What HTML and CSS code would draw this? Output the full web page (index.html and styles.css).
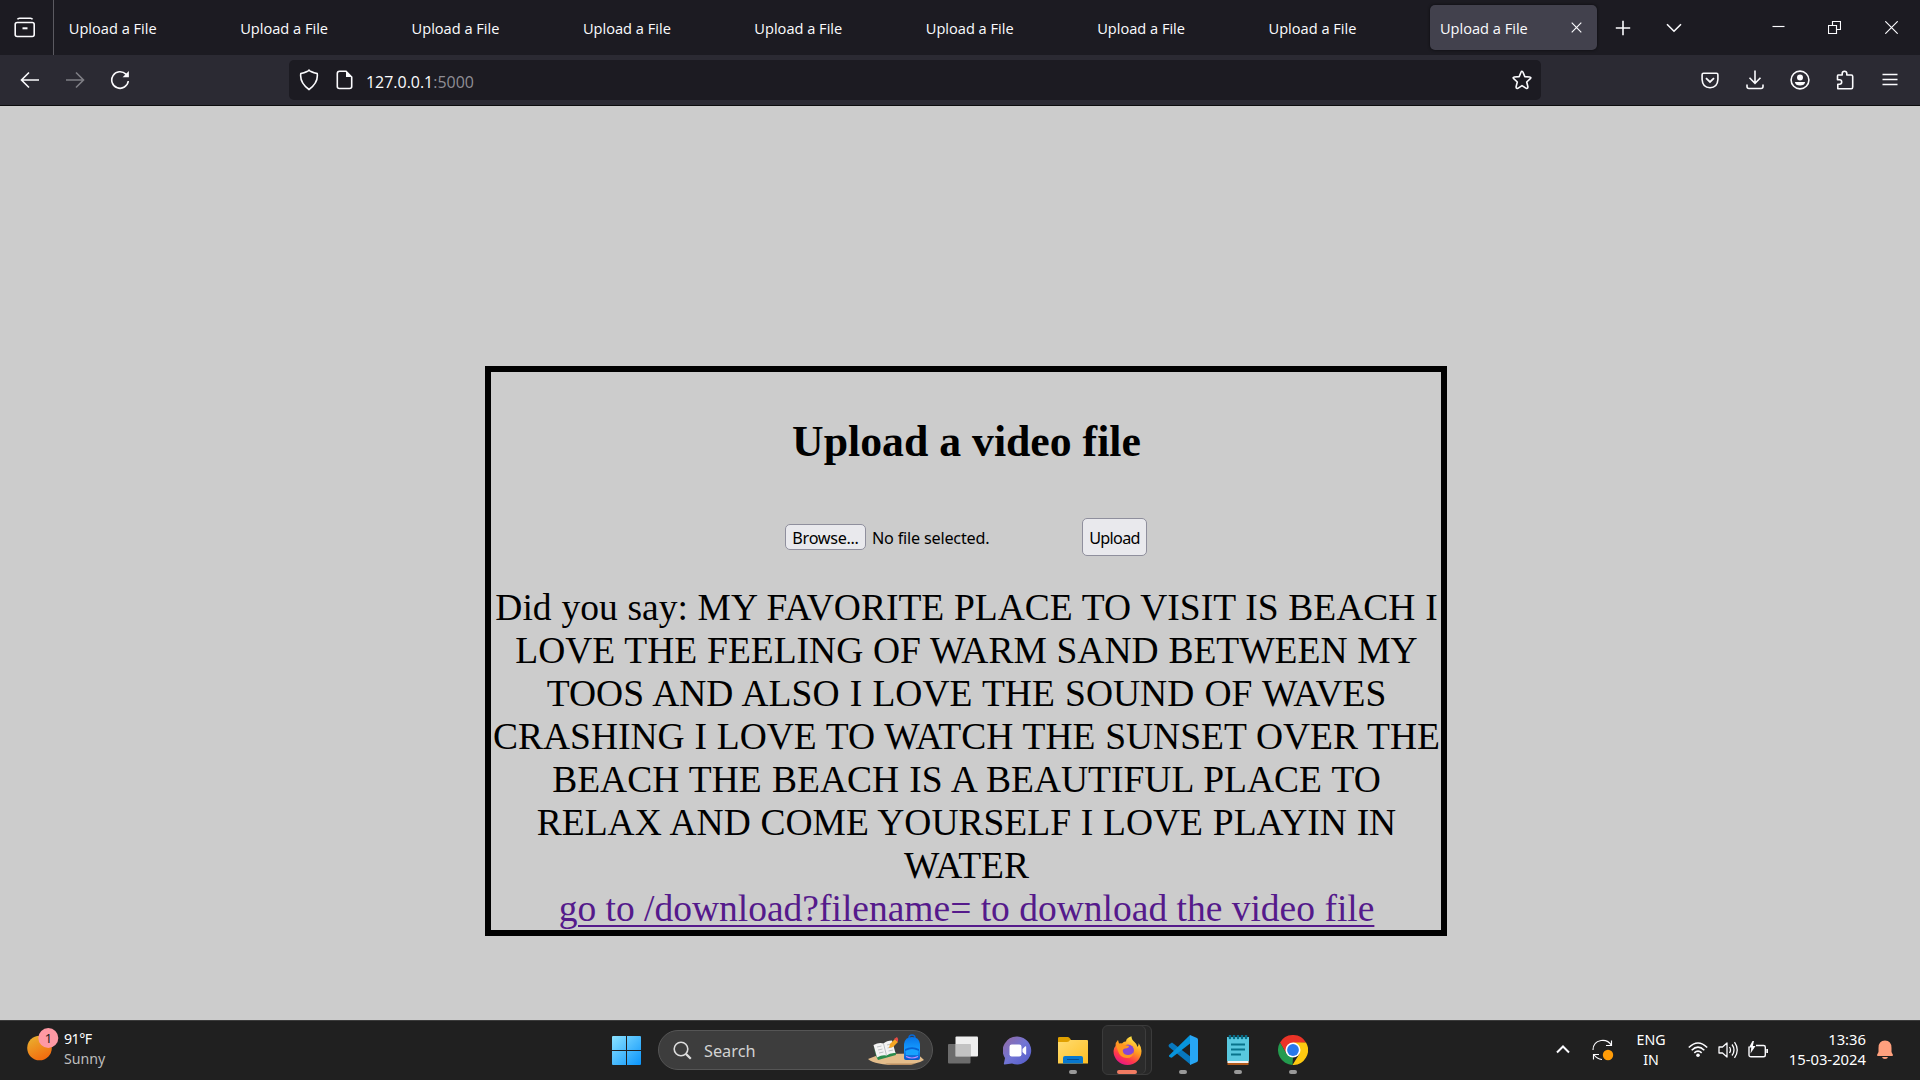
FILE: index.html
```
<!DOCTYPE html>
<html lang="en">
<head>
<meta charset="utf-8">
<title>Upload a File</title>
<link rel="stylesheet" href="styles.css">
</head>
<body>
<div class="screen">
  <header class="tabstrip">
    <div class="firefox-view">
      <svg class="icon" width="22" height="22" viewBox="0 0 22 22"><path d="M3.5 2.3Q4 1.2 5.5 1.2H16.500Q18 1.200 18.500 2.300"/><rect x="1.200" y="5.500" width="19" height="14" rx="2"/><path d="M8.500 11.300H13.500" stroke-width="2"/></svg>
    </div>
    <nav class="tabs">
      <div class="tab">Upload a File</div>
      <div class="tab">Upload a File</div>
      <div class="tab">Upload a File</div>
      <div class="tab">Upload a File</div>
      <div class="tab">Upload a File</div>
      <div class="tab">Upload a File</div>
      <div class="tab">Upload a File</div>
      <div class="tab">Upload a File</div>
      <div class="tab tab-active">Upload a File
        <svg class="icon thin" width="11" height="11" viewBox="0 0 11 11"><path d="M.7.7L10.300 10.300M10.300.7L.7 10.300"/></svg>
      </div>
    </nav>
    <div class="tab-tool new-tab"><svg class="icon" width="16" height="16" viewBox="0 0 16 16"><path d="M8 .8V15.200M.8 8H15.200"/></svg></div>
    <div class="tab-tool list-tabs"><svg class="icon" width="16" height="10" viewBox="0 0 16 10"><path d="M1 1.200L8 8.200L15 1.200"/></svg></div>
    <div class="window-controls">
      <svg class="icon thin" width="13" height="13" viewBox="0 0 13 13"><path d="M.5 5.500H12.500"/></svg>
      <svg class="icon thin" width="13" height="13" viewBox="0 0 13 13"><path d="M.5 4.500H8.500V12.500H.5ZM4.500 4.500V.5H12.500V8.500H8.500"/></svg>
      <svg class="icon thin" width="13" height="13" viewBox="0 0 13 13"><path d="M.3.3L12.700 12.700M12.700.3L.3 12.700"/></svg>
    </div>
  </header>

  <div class="toolbar">
    <div class="tools">
      <span class="tool"><svg class="icon" width="20" height="18" viewBox="0 0 20 18"><path d="M19 9H2M9 1.500L1.500 9L9 16.500"/></svg></span>
      <span class="tool disabled"><svg class="icon" width="20" height="18" viewBox="0 0 20 18"><path d="M1 9H18M11 1.500L18.500 9L11 16.500"/></svg></span>
      <span class="tool"><svg class="icon" width="20" height="20" viewBox="0 0 20 20"><path d="M18.300 11A8.300 8.300 0 1 1 15.900 4.100L17 5.200"/><path class="solid" d="M18.900 1V7.300H12.600Z"/></svg></span>
    </div>
    <div class="urlbar">
      <svg class="icon shield" width="20" height="22" viewBox="0 0 20 22"><path d="M10 1.200Q11 2.600 18.200 4.600Q19.500 13.500 10 20.500Q.5 13.500 1.800 4.600Q9 2.600 10 1.200Z"/></svg>
      <svg class="icon page-icon" width="17" height="20" viewBox="0 0 17 20"><path d="M3.500 1.200H10L15.700 7V16.500Q15.700 18.500 13.500 18.500H3.500Q1.300 18.500 1.300 16.500V3.500Q1.300 1.200 3.500 1.200Z"/><path class="solid" d="M10 .8V7H16Z"/></svg>
      <span class="url">127.0.0.1<span class="port">:5000</span></span>
      <svg class="icon star" width="20" height="20" viewBox="0 0 20 20"><path stroke-linejoin="round" d="M10 1.200Q10.600 1.200 11 2.200L12.800 6.600L17.700 7Q19.600 7.300 18.300 8.700L14.700 12L15.900 16.800Q16 19 14.200 18.300L10 15.600L5.800 18.300Q4 19 4.100 16.800L5.300 12L1.700 8.700Q.4 7.300 2.300 7L7.200 6.600L9 2.200Q9.400 1.200 10 1.200Z"/></svg>
    </div>
    <div class="tools tools-end">
      <span class="tool"><svg class="icon" width="18" height="17" viewBox="0 0 18 17"><path d="M2.500 1.200H15.500Q16.900 1.200 16.900 2.700V7.500Q16.500 15.500 9 15.800Q1.500 15.500 1.100 7.500V2.700Q1.100 1.200 2.500 1.200Z"/><path d="M5 6.200L9 10L13 6.200" stroke-width="1.800"/></svg></span>
      <span class="tool"><svg class="icon" width="18" height="20" viewBox="0 0 18 20"><path d="M9 .5V13M3.500 7.800L9 13.300L14.500 7.800M1 14.500V16.500Q1 18.500 3 18.500H15Q17 18.500 17 16.500V14.500"/></svg></span>
      <span class="tool"><svg class="icon" width="20" height="20" viewBox="0 0 20 20"><circle cx="10" cy="10" r="8.900"/><circle class="solid" cx="10" cy="7.500" r="3"/><path class="solid" d="M4.800 12H15.200Q14.500 15.500 10 15.500T4.800 12Z"/></svg></span>
      <span class="tool"><svg class="icon" width="18" height="20" viewBox="0 0 18 20"><path stroke-linejoin="round" d="M2 5H6.200V3.500A2.300 2.300 0 0 1 10.800 3.500V5H15.300Q16.700 5 16.700 6.500V17Q16.700 18.700 15.300 18.700H1.800V14.200H3.500A2.200 2.200 0 0 0 3.500 9.800H1.500V6.200Q1.500 5 2 5Z"/></svg></span>
      <span class="tool"><svg class="icon" width="16" height="14" viewBox="0 0 16 14"><path d="M.5 1.500H15.500M.5 6.500H15.500M.5 11.500H15.500"/></svg></span>
    </div>
  </div>

  <main class="page">
    <section class="upload-card">
      <h1>Upload a video file</h1>
      <form class="upload-form">
        <button type="button" class="btn browse">Browse...</button>
        <span class="file-name">No file selected.</span>
        <button type="button" class="btn submit">Upload</button>
      </form>
      <p><span class="loose">Did you say: MY FAVORITE PLACE TO VISIT IS BEACH I</span><br><span class="loose">LOVE THE FEELING OF WARM SAND BETWEEN MY</span><br><span class="looser">TOOS AND ALSO I LOVE THE SOUND OF WAVES</span><br><span class="loose">CRASHING I LOVE TO WATCH THE SUNSET OVER THE</span><br><span class="looser">BEACH THE BEACH IS A BEAUTIFUL PLACE TO</span><br><span class="loose">RELAX AND COME YOURSELF I LOVE PLAYIN IN</span><br>WATER<br><a href="#">go to /download?filename= to download the video file</a></p>
    </section>
  </main>

  <footer class="taskbar">
    <div class="weather">
      <svg width="32" height="34" viewBox="0 0 32 34">
        <defs><linearGradient id="sun" x1=".2" y1="0" x2=".7" y2="1"><stop offset="0" stop-color="#e9b02f"/><stop offset="1" stop-color="#f4680c"/></linearGradient></defs>
        <circle cx="12.500" cy="20" r="12.300" fill="url(#sun)"/><circle cx="21.300" cy="10" r="10" fill="#fe99a4"/>
        <text class="badge-text" x="21.500" y="14.800">1</text>
      </svg>
      <div class="weather-text"><span class="temperature">91°F</span><span class="condition">Sunny</span></div>
    </div>
    <div class="task-items">
      <svg class="start" width="29" height="29" viewBox="0 0 29 29">
        <defs><linearGradient id="win" x1="0" y1="0" x2="29" y2="29" gradientUnits="userSpaceOnUse"><stop offset="0" stop-color="#8be2ff"/><stop offset="1" stop-color="#0a94fb"/></linearGradient></defs>
        <path fill="url(#win)" d="M0 1Q0 0 1 0H14V14H0ZM15 0H28Q29 0 29 1V14H15ZM0 15H14V29H1Q0 29 0 28ZM15 15H29V28Q29 29 28 29H15Z"/>
      </svg>
      <div class="search">
        <svg class="icon magnifier" width="19" height="19" viewBox="0 0 19 19"><circle cx="8" cy="8" r="6.800"/><path d="M12.900 12.900L17.800 17.800" stroke-width="2.200"/></svg>
        <span>Search</span>
        <svg class="highlight" width="58" height="33" viewBox="0 0 58 33">
          <defs><linearGradient id="bag" x2="0" y2="1"><stop offset="0" stop-color="#0875e8"/><stop offset=".55" stop-color="#159cff"/><stop offset="1" stop-color="#0753c8"/></linearGradient></defs>
          <path fill="#e4bd8b" d="M1 25L14 20L50 19.500L57 26Q50 31 31 31Q8 31 1 25Z"/><path fill="#b98d60" d="M18 29.500H49L44 31H24Z"/>
          <path fill="#2a8c4c" d="M6.500 13L9 22L11 26L29 21L28.500 18L10 22Z"/><path fill="#f3f3f3" d="M6.500 11Q12 8 16.500 9.500Q19.500 6.500 25 6.500L28.500 19Q23 18.500 19.500 21.500Q15 20.500 10 23.500Z"/><path d="M16.500 9.500L19.500 21.500M10 13L14.500 12M11 16L15.500 15M12 19L16.500 18M20 11L24 10M20.500 14L25 13M21.500 17L26 16" fill="none" stroke="#a4a9ad" stroke-width=".7"/>
          <path fill="#f5a623" d="M22 14L23 10L28 5L31 8L26 13Z"/><path fill="#e94b45" d="M27 5L30 3Q32 5 31 8Z"/>
          <path d="M42 4Q42 1 45 1T48 4" fill="none" stroke="#0967d2" stroke-width="1.500"/><path fill="url(#bag)" d="M37 10Q38 3 45 3T53 10V24Q53 26 51 26H39Q37 26 37 24Z"/><path fill="#0761d2" d="M38 15Q45 11.500 52 15V17Q45 13.500 38 17Z"/><path fill="#18a2ff" d="M39 17Q45 13.500 51 17V21H39Z"/><path stroke="#c88bff" fill="none" stroke-width="1.200" d="M39 22.500Q45 25.500 51 22.500"/>
        </svg>
      </div>
      <div class="apps">
        <div class="app"><svg width="30" height="28" viewBox="0 0 30 28"><rect x="7.500" y=".5" width="22.500" height="20" rx="1" fill="#efefef"/><rect x="0" y="8" width="22.500" height="19.500" rx="1" fill="#858585" opacity=".75"/><path fill="#c3c3c3" d="M7.500 8H22.500V20.500H7.500Z"/></svg></div>
        <div class="app"><svg width="29" height="29" viewBox="0 0 29 29">
          <defs><linearGradient id="chat" x2="1" y2="1"><stop offset="0" stop-color="#95699f"/><stop offset=".5" stop-color="#7275d4"/><stop offset="1" stop-color="#5059c9"/></linearGradient></defs>
          <path fill="url(#chat)" d="M14.500.5A14 14 0 1 1 9 27.500L1.500 28.500Q.5 28.500 1 27L2 22A14 14 0 0 1 14.500.5Z"/><rect x="6.500" y="8.500" width="12" height="12" rx="2.200" fill="#fff"/><path fill="#fff" d="M19.500 13L22 10.500Q23.200 10 23.200 11V18Q23.200 19 22 18.500L19.500 16Z"/></svg></div>
        <div class="app running"><svg width="30" height="28" viewBox="0 0 30 28">
          <defs><linearGradient id="folder" x2="1" y2="1"><stop offset="0" stop-color="#ffdc70"/><stop offset="1" stop-color="#ffbf24"/></linearGradient></defs>
          <path fill="#e0a000" d="M0 2Q0 1 1.500 1H10Q11 1 12 2.500L13 4H20V10H0Z"/><path fill="url(#folder)" d="M0 6H9Q11 6 12 4H29Q30 4 30 5V27.500H0Z"/><path fill="#0878cf" d="M5 27.500V22Q5 20 7 20H23Q25 20 25 22V27.500Z"/><path stroke="#064d91" d="M9 23.500H21"/></svg></div>
        <div class="app running current"><svg width="29" height="29" viewBox="0 0 29 29">
          <defs><linearGradient id="fox" x1=".8" y1="0" x2=".3" y2="1"><stop offset="0" stop-color="#fff44f"/><stop offset=".45" stop-color="#ff9a1f"/><stop offset=".75" stop-color="#ff394a"/><stop offset="1" stop-color="#e3158b"/></linearGradient></defs>
          <path fill="url(#fox)" d="M2.500 10Q2.500 6 5 4L6 7.500H9Q11 5 13 5.500Q13 2 18.500.3Q18.500 4 21.500 6Q24 8 24.500 11Q26 9 25.500 7Q28.500 11 28.500 15A14 14 0 0 1 .5 15Q.5 12 2.500 10Z"/><circle cx="15" cy="14.500" r="6" fill="#8746d5"/><path fill="#ff9620" d="M3 9Q8 6 12 9L16 10Q16 12 12 12.500Q9 13 10 16Q11 19 15 19Q19 19 20.500 16Q20 22 14 22Q7 22 5 15Z"/></svg></div>
        <div class="app running"><svg width="30" height="30" viewBox="0 0 30 30"><path fill="#0877bd" d="M1 9.500L4 7.500L23 22V30L1 12Q0 10.500 1 9.500Z"/><path fill="#0794dc" d="M1 20.500L22 0L24 7L4 22.500Q2.500 23 1 21.500Z"/><path fill="#27a6f5" d="M22 0L29 3Q30 3.500 30 5V25Q30 26.500 29 27L22 30Z"/></svg></div>
        <div class="app running"><svg width="22" height="30" viewBox="0 0 22 30"><path fill="#b45b1b" d="M.5 25H21.500V30H.5Z"/><path fill="#f2f2f2" d="M.5 25H21.500V28H.5Z"/><path fill="#59c8df" d="M0 2H22V26H0Z"/><path stroke="#086d88" stroke-width="2.500" stroke-linecap="round" d="M3 .8V3M7 .8V3M11 .8V3M15 .8V3M19 .8V3"/><path stroke="#08738b" stroke-width="1.800" d="M4 9.500H18M4 14.500H18M4 19.500H14"/></svg></div>
        <div class="app running"><svg width="30" height="30" viewBox="0 0 30 30"><path fill="#ea3327" d="M2 7.500A15 15 0 0 1 28 7.500L15 8.500L8.500 18.800Z"/><path fill="#239b4e" d="M2 7.500L8.500 18.700L15 22.500L14.500 30A15 15 0 0 1 2 7.500Z"/><path fill="#fdc910" d="M15 7.500H28A15 15 0 0 1 14.500 30L21.500 18.800Z"/><circle cx="15" cy="15" r="7.500" fill="#fff"/><circle cx="15" cy="15" r="5.900" fill="#2878eb"/></svg></div>
      </div>
    </div>
    <div class="tray">
      <span class="tray-icon overflow"><svg class="icon" width="14" height="9" viewBox="0 0 14 9"><path stroke-width="2" d="M1 7.500L7 1.500L13 7.500"/></svg></span>
      <span class="tray-icon sync"><svg class="icon thin" width="22" height="22" viewBox="0 0 22 22"><path d="M1 11Q1 3 9 1.500Q16 .5 19.500 6.500M19.500 1.500V6.500H14M1.500 20.500V15.500H7M1.800 15.500Q5 20 10 20.500"/><circle cx="16" cy="16" r="5.200" fill="#ff9c08" stroke="none"/></svg></span>
      <div class="language"><span>ENG</span><span>IN</span></div>
      <span class="tray-icon"><svg class="icon" width="20" height="16" viewBox="0 0 20 16"><path d="M.8 5.500Q10-3.500 19.200 5.500M3.700 8.200Q10 2 16.300 8.200M6.300 10.900Q10 7.500 13.700 10.900"/><circle class="solid" cx="10" cy="13.300" r="1.800"/></svg></span>
      <span class="tray-icon"><svg class="icon" width="20" height="18" viewBox="0 0 20 18"><path stroke-width="1.300" stroke-linejoin="round" d="M1 6H4.500L9 2V16L4.500 12H1ZM11.500 6Q13.500 9 11.500 12M14 3.500Q18 9 14 14.500M16.500 1.200Q22 9 16.500 16.800"/></svg></span>
      <span class="tray-icon"><svg class="icon" width="20" height="18" viewBox="0 0 20 18"><path stroke-width="1.400" d="M8 4.500H15.500Q17.300 4.500 17.300 6V14Q17.300 15.800 15.500 15.800H3Q1 15.800 1 14V5.500"/><path class="solid" d="M18.300 8H20V12H18.300ZM4.500 0L1 6.500H3.300L2.500 12.500L7.500 5H4.800L6 0Z"/></svg></span>
      <div class="clock"><span>13:36</span><span>15-03-2024</span></div>
      <svg class="bell" width="16" height="19" viewBox="0 0 16 19"><path fill="#ffa07d" d="M1.500 8Q1.500.5 8 .5T14.500 8V12L16 15Q16 16 15 16H1Q0 16 0 15L1.500 12ZM5 17H11Q10.500 19 8 19T5 17Z"/></svg>
    </div>
  </footer>
</div>
</body>
</html>
```
FILE: styles.css
```
* { box-sizing: border-box; }
body { margin: 0; overflow: hidden; font-family: "Open Sans", "Noto Sans", sans-serif; }
svg { display: block; flex: none; }
.screen { display: flex; flex-direction: column; width: 1920px; height: 1080px; background: #ccc; }
.icon { fill: none; stroke: #fbfbfe; stroke-width: 1.6; }
.icon.thin { stroke-width: 1.15; }
.icon .solid { fill: #fbfbfe; stroke: none; }

.tabstrip { display: flex; align-items: center; height: 55px; background: #1c1b22; color: #fbfbfe; }
.firefox-view { display: flex; align-items: center; width: 54px; height: 55px; padding-left: 14px; border-right: 1px solid #5b5a61; }
.tabs { display: flex; gap: 4.4px; padding-left: 4.8px; }
.tab { display: flex; align-items: center; justify-content: space-between; width: 167px; height: 45px; padding: 0 15px 0 10px; border-radius: 5px; font-size: 14.6px; white-space: nowrap; }
.tab-active { background: #42414d; box-shadow: 0 0 3px #0b0b0e; }
.tab-tool { display: flex; justify-content: center; }
.new-tab { width: 53px; }
.list-tabs { width: 48px; }
.window-controls { display: flex; flex: 1; justify-content: space-between; padding: 0 22px 0 74px; }

.toolbar { display: flex; align-items: center; height: 51px; padding: 0 8px 0 7px; background: #2b2a33; border-bottom: 1px solid #0c0c0d; }
.tools { display: flex; width: 282px; }
.tool { display: flex; align-items: center; justify-content: center; width: 45px; height: 40px; }
.disabled { opacity: .4; }
.tools-end { flex: 1; justify-content: flex-end; }
.urlbar { display: flex; align-items: center; width: 1252px; height: 40px; padding: 0 9px 0 10px; border-radius: 5px; background: #1c1b22; color: #fbfbfe; }
.page-icon { margin: 0 13px 0 17px; }
.url { flex: 1; padding-top: 3px; font-size: 15.95px; }
.port { color: #8f8e95; }

.page { flex: 1; padding: 260px 0 0 485px; }
.upload-card { width: 962px; height: 570px; border: 6px solid #000; text-align: center; color: #000; font-family: "Liberation Serif", serif; }
.upload-card h1 { margin: 44px 0 52px; padding-left: 1px; font-size: 43.75px; line-height: 50px; }
.upload-form { display: flex; align-items: center; justify-content: center; height: 38px; font-family: "Noto Sans", sans-serif; font-size: 16.2px; }
.btn { padding: 0; border: 1px solid #8f8f9d; border-radius: 5px; background: #e9e9ed; color: #000; font: inherit; line-height: 24px; }
.browse { width: 81px; height: 26px; padding-top: 1px; letter-spacing: -.3px; }
.file-name { width: 210px; margin-left: 6px; padding-top: 2px; text-align: left; letter-spacing: -.2px; }
.submit { width: 65px; height: 38px; padding-top: 2px; letter-spacing: -.7px; }
.upload-card p { margin: 30px 0 0; padding-left: 1px; font-size: 37.5px; line-height: 43px; white-space: nowrap; }
.loose { word-spacing: .4px; }
.looser { word-spacing: .85px; }
.upload-card a { color: #551a8b; text-decoration-thickness: 2px; text-underline-offset: 4px; }

.taskbar { display: flex; align-items: center; height: 60px; border-top: 1px solid #3b3b3b; background: #202020; color: #fff; font-family: "Noto Sans", sans-serif; font-size: 14.2px; line-height: 20px; }
.weather { display: flex; width: 612px; padding: 0 0 4px 27px; }
.weather-text { display: flex; flex-direction: column; margin: 1px 0 0 5px; }
.temperature { letter-spacing: -.5px; }
.condition { color: #bdbdbd; }
.badge-text { fill: #202020; font-size: 13px; text-anchor: middle; }
.task-items { display: flex; align-items: center; width: 709px; padding-bottom: 1px; }
.search { display: flex; align-items: center; width: 275px; height: 40px; margin: 0 2px 0 17px; padding: 0 7px 0 14px; border: 1px solid #555; border-radius: 20px; background: #3d3d3d; color: #d2d2d2; font-size: 16.3px; }
.magnifier { stroke: #ddd; }
.search span { flex: 1; margin-left: 12px; padding-top: 2px; }
.apps { display: flex; }
.app { position: relative; display: flex; align-items: center; justify-content: center; width: 55px; height: 50px; }
.running::after { content: ""; position: absolute; bottom: 1px; width: 8px; height: 4px; border-radius: 2px; background: #999; }
.current { width: 50px; margin: 0 3px 0 2px; border: 1px solid #3b3b3b; border-radius: 6px; background: #2b2b2b; box-shadow: inset -5px 0 0 #272727, inset -6px 0 0 #3d3d3d; }
.current::after { bottom: 0; width: 20px; background: #f07b62; }
.tray { display: flex; flex: 1; align-items: center; padding: 0 0 2px 227px; }
.tray-icon { display: flex; justify-content: center; width: 30px; }
.sync { width: 50px; }
.language, .clock { display: flex; flex-direction: column; align-items: center; }
.language { width: 60px; margin: 0 2px 0 -7px; padding-top: 1px; }
.clock { width: 93px; align-items: flex-end; padding-bottom: 2px; font-size: 14.8px; }
.bell { margin-left: 11px; }
```
